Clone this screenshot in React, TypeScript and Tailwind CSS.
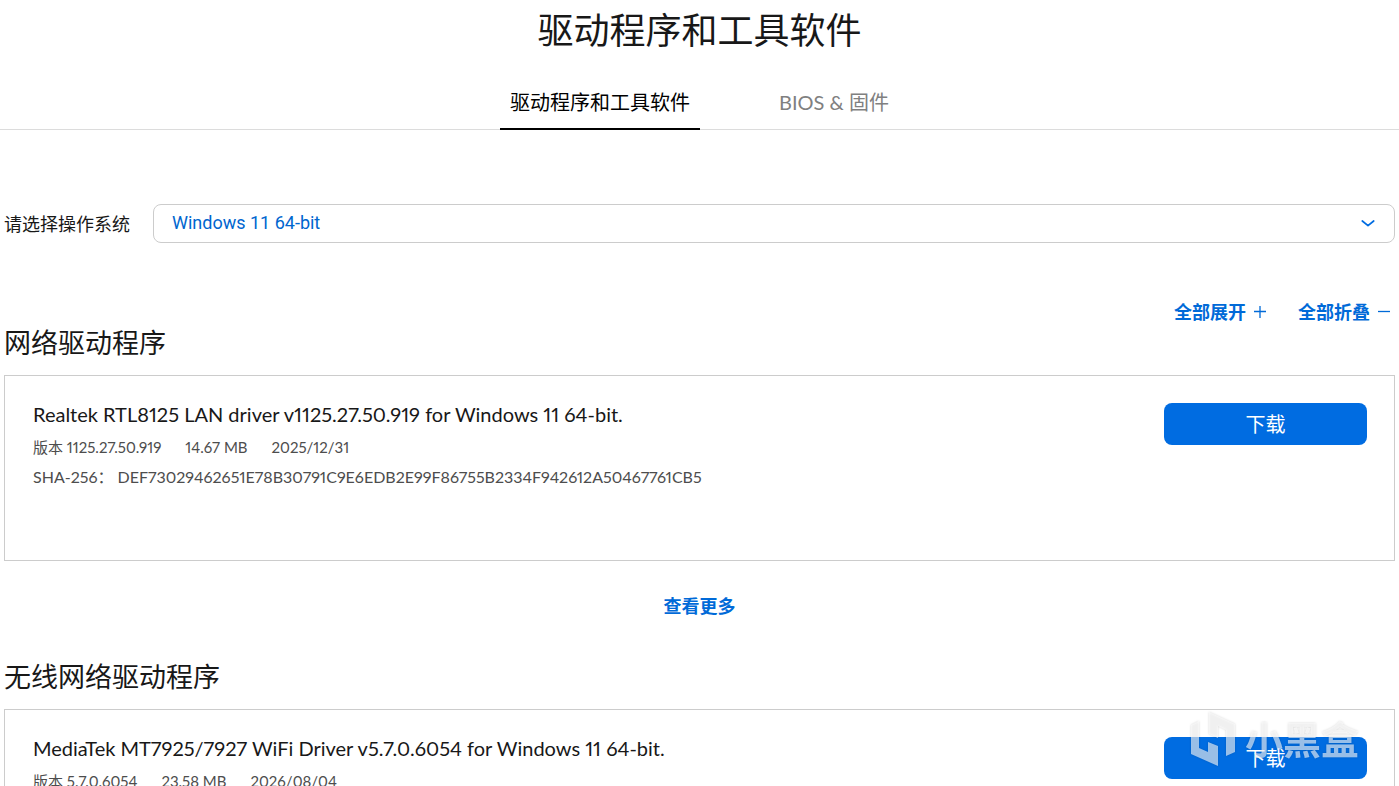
import React from 'react';

type Driver = {
  category: string;
  title: string;
  version: string;
  size: string;
  date: string;
  sha?: string;
};

const drivers: Driver[] = [
  {
    category: '网络驱动程序',
    title: 'Realtek RTL8125 LAN driver v1125.27.50.919 for Windows 11 64-bit.',
    version: '1125.27.50.919',
    size: '14.67 MB',
    date: '2025/12/31',
    sha: 'DEF73029462651E78B30791C9E6EDB2E99F86755B2334F942612A50467761CB5',
  },
  {
    category: '无线网络驱动程序',
    title: 'MediaTek MT7925/7927 WiFi Driver v5.7.0.6054 for Windows 11 64-bit.',
    version: '5.7.0.6054',
    size: '23.58 MB',
    date: '2026/08/04',
  },
];

function Tabs() {
  return (
    <nav className="mt-6 flex justify-center gap-[69px] border-b border-[#dcdcdc] text-xl leading-6">
      <button type="button" className="-mb-px border-b-2 border-black px-2.5 pt-3.5 pb-3.5 text-black">
        驱动程序和工具软件
      </button>
      <button type="button" className="-mb-px border-b-2 border-transparent px-2.5 pt-3.5 pb-3.5 text-[#808080]">
        BIOS &amp; 固件
      </button>
    </nav>
  );
}

function OsPicker() {
  return (
    <div className="mt-[74px] flex items-center gap-[23px]">
      <label htmlFor="os" className="shrink-0 text-lg leading-6">
        请选择操作系统
      </label>
      <div className="relative flex-1">
        <select
          id="os"
          className="block h-[39px] w-full appearance-none rounded-lg border border-[#ccc] bg-white pr-10 pb-0.5 pl-[18px] font-['Roboto','Noto_Sans_CJK_SC',sans-serif] text-lg text-[#0066cf]"
        >
          <option>Windows 11 64-bit</option>
        </select>
        <svg
          className="pointer-events-none absolute top-4 right-5 h-2 w-3.5"
          viewBox="0 0 14 8"
          fill="none"
          stroke="#006ce1"
          strokeWidth="1.7"
          strokeLinecap="round"
          strokeLinejoin="round"
        >
          <path d="M1.3 1 7 5.700l5.700-4.700" />
        </svg>
      </div>
    </div>
  );
}

function FoldControls() {
  return (
    <div className="mt-[57px] flex justify-end gap-8 pr-[5px] text-lg leading-6 font-bold text-[#006ad8]">
      <button type="button" className="flex items-center gap-2">
        全部展开
        <svg className="h-3 w-3" viewBox="0 0 12 12" stroke="currentColor" strokeWidth="1.3">
          <path d="M0 5.500h12M6 0v12" />
        </svg>
      </button>
      <button type="button" className="flex items-center gap-2">
        全部折叠
        <svg className="h-3 w-3" viewBox="0 0 12 12" stroke="currentColor" strokeWidth="1.3">
          <path d="M0 5.500h12" />
        </svg>
      </button>
    </div>
  );
}

function DriverCard({ driver }: { driver: Driver }) {
  return (
    <article className="flex items-start justify-between border border-[#ccc] pt-[27px] pr-[27px] pb-[71px] pl-7">
      <div className="proportional-nums">
        <h3 className="text-xl leading-[22px]">{driver.title}</h3>
        <div className="mt-2.5 flex gap-6 text-[15px] leading-6 text-[#4d4d4d]">
          <span>版本 {driver.version}</span>
          <span>{driver.size}</span>
          <span>{driver.date}</span>
        </div>
        {driver.sha && (
          <p className="mt-1.5 text-base leading-6 text-[#4d4d4d]">SHA-256： {driver.sha}</p>
        )}
      </div>
      <button type="button" className="h-[42px] w-[203px] shrink-0 rounded-lg bg-[#006ce1] text-xl text-white">
        下载
      </button>
    </article>
  );
}

function Watermark() {
  return (
    <div className="pointer-events-none fixed right-10 bottom-[19px] flex items-center gap-2 text-white/60 drop-shadow-[0_0_1px_rgba(0,0,0,0.25)]">
      <svg className="h-14 w-12" viewBox="0 0 48 56" fill="currentColor">
        <path d="M2 14 10 10V37L19 41V31L29 35V55L2 43Z" />
        <path d="M20 1 46 13V41L37 45V19L29 15V27L20 23Z" />
      </svg>
      <span className="text-[38px] leading-14 font-bold">小黑盒</span>
    </div>
  );
}

export default function App() {
  return (
    <div className="h-screen overflow-hidden bg-white font-['Lato','Noto_Sans_CJK_SC',sans-serif] text-[#181818]">
      <h1 className="pt-2 text-center text-4xl leading-[44px]">驱动程序和工具软件</h1>
      <Tabs />
      <main className="px-1">
        <OsPicker />
        <FoldControls />
        {drivers.map((driver, index) => (
          <section key={driver.category} className={index === 0 ? 'mt-[3px]' : 'mt-[42px]'}>
            <h2 className="mb-4 text-[27px] leading-8">{driver.category}</h2>
            <DriverCard driver={driver} />
            <div className="mt-[33px] text-center">
              <a href="#more" className="inline-block text-lg leading-6 font-bold text-[#006ad8]">
                查看更多
              </a>
            </div>
          </section>
        ))}
      </main>
      <Watermark />
    </div>
  );
}
